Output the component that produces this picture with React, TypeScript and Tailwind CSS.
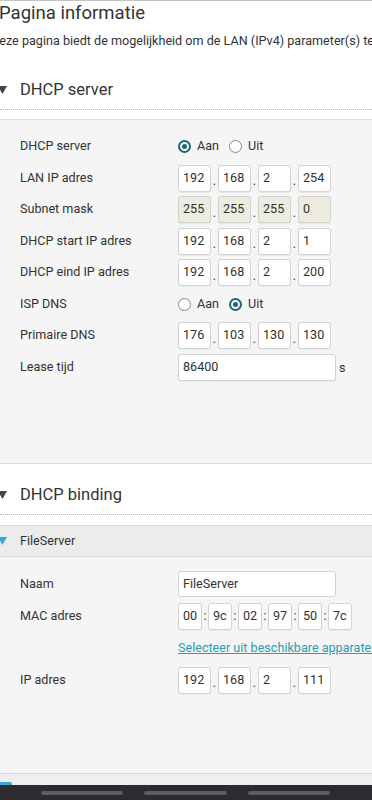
import React from 'react';

const Box = ({ v, w, shaded }: { v: string; w: string; shaded?: boolean }) => (
  <div
    className={`h-[27px] ${w} ${shaded ? 'bg-[#edecdf]' : 'bg-white'} border border-[#d2d2d2] rounded-[3px] pl-[4px] flex items-center text-[12.6px] text-[#333] shadow-[0_1px_1px_rgba(0,0,0,0.05)]`}
  >
    {v}
  </div>
);

const IpField = ({ parts, shaded }: { parts: string[]; shaded?: boolean }) => (
  <div className="flex items-center">
    {parts.map((p, i) => (
      <React.Fragment key={i}>
        {i > 0 && <span className="w-[7px] text-center text-[12.6px] self-end pb-[4px] leading-none">.</span>}
        <Box v={p} w="w-[33px]" shaded={shaded} />
      </React.Fragment>
    ))}
  </div>
);

const MacField = ({ parts }: { parts: string[] }) => (
  <div className="flex items-center">
    {parts.map((p, i) => (
      <React.Fragment key={i}>
        {i > 0 && <span className="w-[6px] text-center text-[12px] leading-none">:</span>}
        <Box v={p} w="w-[24px]" />
      </React.Fragment>
    ))}
  </div>
);

const Radio = ({ on }: { on?: boolean }) =>
  on ? (
    <span className="w-[13px] h-[13px] shrink-0 rounded-full border-2 border-[#1e6877] flex items-center justify-center">
      <span className="w-[5px] h-[5px] rounded-full bg-[#1e6877]" />
    </span>
  ) : (
    <span className="block w-[13px] h-[13px] shrink-0 rounded-full border-[1.5px] border-[#8a8a8a] bg-white" />
  );

const RadioPair = ({ aan }: { aan: boolean }) => (
  <div className="flex items-center text-[12.6px]">
    <Radio on={aan} />
    <span className="ml-[6px]">Aan</span>
    <span className="ml-[10px] flex">
      <Radio on={!aan} />
    </span>
    <span className="ml-[6px]">Uit</span>
  </div>
);

const Row = ({ label, h = 'h-[31.5px]', children }: { label: string; h?: string; children?: React.ReactNode }) => (
  <div className={`flex items-center ${h}`}>
    <div className="w-[178px] pl-[20px] text-[12.6px] text-[#333]">{label}</div>
    {children}
  </div>
);

const Triangle = ({ color }: { color: string }) => (
  <svg width="9" height="8" viewBox="0 0 9 8" className="-ml-[2px] shrink-0">
    <polygon points="0,0 9,0 4.5,8" fill={color} />
  </svg>
);

export default function App() {
  return (
    <div className="w-[372px] h-[800px] overflow-hidden bg-white flex flex-col text-[#333] font-['Roboto',sans-serif] border-t border-[#c4c4c4]">
      <div className="h-[27px] -ml-[1px] text-[18.5px] leading-[25px] whitespace-nowrap">Pagina informatie</div>
      <div className="h-[27px] -ml-[9px] text-[12.6px] leading-[26px] whitespace-nowrap">
        Deze pagina biedt de mogelijkheid om de LAN (IPv4) parameter(s) te wijzigen.
      </div>

      <div className="mt-[16px] h-[38px] flex items-center">
        <Triangle color="#444" />
        <span className="ml-[13px] text-[16.5px]">DHCP server</span>
      </div>
      <div className="border-b border-dotted border-[#b5b5b5]" />
      <div className="h-[9px]" />

      <div className="bg-[#f5f5f5] border-t border-b border-[#dcdcdc] pt-[11px] h-[345px]">
        <Row label="DHCP server">
          <RadioPair aan />
        </Row>
        <Row label="LAN IP adres">
          <IpField parts={['192', '168', '2', '254']} />
        </Row>
        <Row label="Subnet mask">
          <IpField parts={['255', '255', '255', '0']} shaded />
        </Row>
        <Row label="DHCP start IP adres">
          <IpField parts={['192', '168', '2', '1']} />
        </Row>
        <Row label="DHCP eind IP adres">
          <IpField parts={['192', '168', '2', '200']} />
        </Row>
        <Row label="ISP DNS">
          <RadioPair aan={false} />
        </Row>
        <Row label="Primaire DNS">
          <IpField parts={['176', '103', '130', '130']} />
        </Row>
        <Row label="Lease tijd">
          <Box v="86400" w="w-[158px]" />
          <span className="ml-[3px] text-[12.6px] self-end pb-[5px]">s</span>
        </Row>
      </div>

      <div className="mt-[12px] h-[38px] flex items-center">
        <Triangle color="#444" />
        <span className="ml-[13px] text-[16.5px]">DHCP binding</span>
      </div>
      <div className="border-b border-dotted border-[#b5b5b5]" />
      <div className="h-[10px]" />

      <div className="h-[32px] bg-[#ececec] border-t border-b border-[#dadada] flex items-center">
        <Triangle color="#3aa6dc" />
        <span className="ml-[13px] text-[12.6px]">FileServer</span>
      </div>

      <div className="flex-1 bg-[#f5f5f5] pt-[11px]">
        <Row label="Naam" h="h-[32px]">
          <div className="h-[26px] w-[158px] bg-white border border-[#d2d2d2] rounded-[3px] pl-[4px] flex items-center text-[12.6px]">
            FileServer
          </div>
        </Row>
        <Row label="MAC adres" h="h-[32px]">
          <MacField parts={['00', '9c', '02', '97', '50', '7c']} />
        </Row>
        <div className="h-[32px] flex items-center pl-[178px]">
          <span className="text-[12.6px] text-[#2a9db2] underline whitespace-nowrap">
            Selecteer uit beschikbare apparaten
          </span>
        </div>
        <Row label="IP adres" h="h-[32px]">
          <IpField parts={['192', '168', '2', '111']} />
        </Row>
      </div>

      <div className="h-[12px] bg-[#efefef] border-t border-[#d6d6d6] flex items-end">
        <div className="w-[12px] h-[3px] bg-[#3aa6dc] rounded-tr-[2px]" />
      </div>
      <div className="h-[15px] bg-[#2b2b30] flex items-start pt-[6px] pl-[41px] gap-[21px]">
        <div className="w-[82px] h-[4px] rounded-full bg-[#5c5c62]" />
        <div className="w-[83px] h-[4px] rounded-full bg-[#5c5c62]" />
        <div className="w-[82px] h-[4px] rounded-full bg-[#5c5c62]" />
      </div>
    </div>
  );
}
